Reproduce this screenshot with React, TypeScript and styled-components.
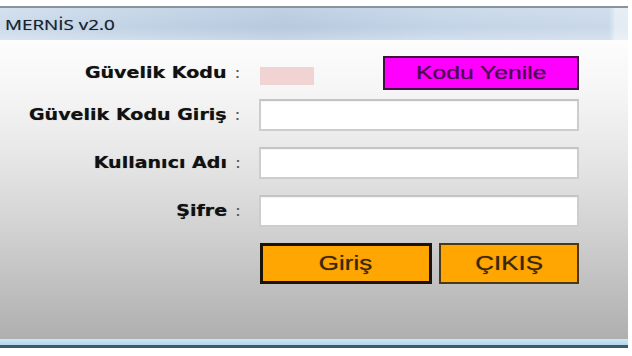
import React from "react";
import styled, { createGlobalStyle } from "styled-components";

const GlobalStyle = createGlobalStyle`
  html, body { margin: 0; padding: 0; background: #ffffff; }
  body { width: 632px; height: 356px; overflow: hidden; }
  * { box-sizing: border-box; }
`;

const Page = styled.div`
  padding-top: 6px;
  width: 632px;
`;

const Window = styled.div`
  width: 628px;
  display: flex;
  flex-direction: column;
`;

const TopLine = styled.div`
  height: 2px;
  background: #8a939c;
`;

const TitleBar = styled.div`
  height: 32px;
  display: flex;
  align-items: center;
  padding-left: 5px;
  background:
    linear-gradient(180deg, rgba(255,255,255,0.15) 0%, rgba(255,255,255,0) 60%, rgba(255,255,255,0.25) 100%),
    linear-gradient(90deg, #ccdbeb 0%, #bfd1e4 25%, #b6c9de 45%, #c3d4e7 70%, #c9d8e9 97%, #e3ebf3 98%);
`;

const Stretch = styled.span<{ $sx: number; $origin?: string }>`
  display: inline-block;
  transform: scaleX(${(p) => p.$sx});
  transform-origin: ${(p) => p.$origin ?? "center"};
  white-space: nowrap;
`;

const Title = styled.div`
  font-family: "Open Sans", "Noto Sans", sans-serif;
  font-size: 14.5px;
  color: #17222f;
  margin-top: 1px;
  text-shadow: 0 0 0.6px rgba(23, 34, 47, 0.6);
`;

const Body = styled.div`
  height: 299px;
  padding-top: 16px;
  background: linear-gradient(
    180deg,
    #fdfdfd 0%,
    #f5f5f5 18%,
    #e6e6e6 40%,
    #d3d3d3 62%,
    #c2c2c2 80%,
    #afafaf 100%
  );
`;

const Row = styled.div<{ $mt?: number }>`
  display: flex;
  align-items: center;
  margin-top: ${(p) => p.$mt ?? 0}px;
`;

const Label = styled.div`
  width: 241px;
  flex-shrink: 0;
  text-align: right;
  font-family: "DejaVu Sans", sans-serif;
  font-weight: bold;
  font-size: 15px;
  color: #111111;
  text-shadow: 0 0 0.7px rgba(0, 0, 0, 0.55);
`;

const Colon = styled.span`
  font-weight: normal;
  color: #5a5a5a;
  margin-left: 6px;
  text-shadow: none;
`;

const Field = styled.div`
  margin-left: 18px;
  width: 320px;
  display: flex;
  align-items: center;
`;

const CodeBox = styled.div`
  width: 54px;
  height: 18px;
  margin-left: 1px;
  margin-top: 5px;
  background: #f1d3d3;
`;

const RefreshButton = styled.button`
  margin-left: auto;
  width: 196px;
  height: 34px;
  background: #ff00ff;
  border: 2px solid #3d1440;
  font-family: "Liberation Sans", Arial, sans-serif;
  font-size: 19px;
  color: #4a0a52;
  text-shadow: 0 0 0.8px rgba(74, 10, 82, 0.7);
  padding: 0;
  display: flex;
  align-items: center;
  justify-content: center;
`;

const Input = styled.input`
  width: 320px;
  height: 32px;
  border: 2px solid #cdcdcd;
  border-top-color: #c4c4c4;
  background: #ffffff;
  outline: none;
  box-shadow: inset 0 1px 1px rgba(0, 0, 0, 0.05);
`;

const ActionButton = styled.button<{ $w: number; $focused?: boolean; $ml?: number }>`
  width: ${(p) => p.$w}px;
  height: 41px;
  margin-left: ${(p) => p.$ml ?? 0}px;
  background: #ffa602;
  border: ${(p) => (p.$focused ? "3px solid #1b1406" : "2px solid #4a381c")};
  font-family: "Liberation Sans", Arial, sans-serif;
  font-size: 20px;
  color: #3a2608;
  text-shadow: 0 0 0.8px rgba(58, 38, 8, 0.7);
  padding: 0;
  display: flex;
  align-items: center;
  justify-content: center;
`;

const BottomStrip = styled.div`
  height: 6px;
  background: linear-gradient(180deg, #cfe6f3, #b4d6ea);
`;

const BottomLine = styled.div`
  height: 3px;
  background: #3e5b6b;
`;

const LabelText: React.FC<{ text: string }> = ({ text }) => (
  <Label>
    <Stretch $sx={1.27} $origin="right">
      {text}
      <Colon>:</Colon>
    </Stretch>
  </Label>
);

export default function App() {
  return (
    <>
      <GlobalStyle />
      <Page>
        <Window>
          <TopLine />
          <TitleBar>
            <Title>
              <Stretch $sx={1.3} $origin="left">MERNİS v2.0</Stretch>
            </Title>
          </TitleBar>
          <Body>
            <Row>
              <LabelText text="Güvelik Kodu" />
              <Field>
                <CodeBox />
                <RefreshButton>
                  <Stretch $sx={1.3}>Kodu Yenile</Stretch>
                </RefreshButton>
              </Field>
            </Row>
            <Row $mt={9}>
              <LabelText text="Güvelik Kodu Giriş" />
              <Field>
                <Input />
              </Field>
            </Row>
            <Row $mt={16}>
              <LabelText text="Kullanıcı Adı" />
              <Field>
                <Input />
              </Field>
            </Row>
            <Row $mt={16}>
              <LabelText text="Şifre" />
              <Field>
                <Input type="password" />
              </Field>
            </Row>
            <Row $mt={16}>
              <Label />
              <Field>
                <ActionButton $w={172} $focused style={{ marginLeft: 1 }}>
                  <Stretch $sx={1.3}>Giriş</Stretch>
                </ActionButton>
                <ActionButton $w={140} $ml={7}>
                  <Stretch $sx={1.3}>ÇIKIŞ</Stretch>
                </ActionButton>
              </Field>
            </Row>
          </Body>
          <BottomStrip />
          <BottomLine />
        </Window>
      </Page>
    </>
  );
}
